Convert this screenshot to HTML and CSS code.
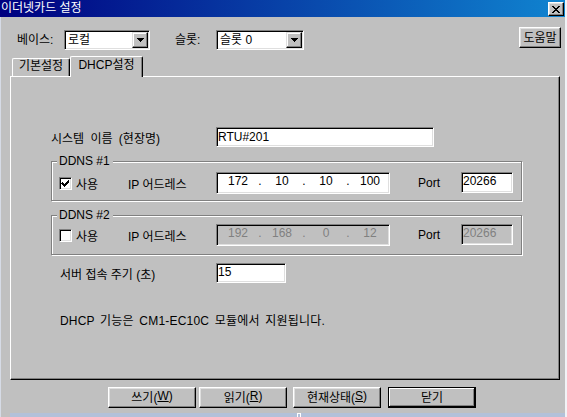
FILE: index.html
```html
<!DOCTYPE html>
<html lang="ko">
<head>
<meta charset="utf-8">
<title>이더넷카드 설정</title>
<link rel="stylesheet" href="styles.css">
</head>
<body>
<div class="window">
  <div class="titlebar">
    <span class="title">이더넷카드 설정</span>
    <span class="close"><svg width="8" height="7" viewBox="0 0 8 7" shape-rendering="crispEdges"><path d="M0 0h2v1h1v1h2v-1h1v-1h2v1h-1v1h-1v1h-1v1h1v1h1v1h1v1h-2v-1h-1v-1h-2v1h-1v1h-2v-1h1v-1h1v-1h1v-1h-1v-1h-1v-1h-1z" fill="#000"/></svg></span>
  </div>
  <div class="client">
    <div class="toprow">
      <span class="lbl lbl-base">베이스:</span>
      <div class="combo combo-base"><span class="combo-text">로컬</span><span class="dd-btn"><svg width="7" height="4" viewBox="0 0 7 4" shape-rendering="crispEdges"><path d="M0 0h7v1h-1v1h-1v1h-1v1h-1v-1h-1v-1h-1v-1h-1z" fill="#000"/></svg></span></div>
      <span class="lbl lbl-slot">슬롯:</span>
      <div class="combo combo-slot"><span class="combo-text">슬롯 0</span><span class="dd-btn"><svg width="7" height="4" viewBox="0 0 7 4" shape-rendering="crispEdges"><path d="M0 0h7v1h-1v1h-1v1h-1v1h-1v-1h-1v-1h-1v-1h-1z" fill="#000"/></svg></span></div>
      <button class="btn help">도움말</button>
    </div>
    <div class="tabs">
      <div class="tab tab-inactive">기본설정</div>
      <div class="tab tab-active">DHCP설정</div>
    </div>
    <div class="panel">
      <div class="row name-row">
        <span class="name-label">시스템 이름 (현장명)</span>
        <div class="field name-field">RTU#201</div>
      </div>
      <div class="group group1">
        <div class="group-title">DDNS #1</div>
        <div class="row ddns-row">
          <span class="check"><svg width="9" height="9" viewBox="0 0 9 9" shape-rendering="crispEdges"><path d="M1 3h1v1h1v1h1v-1h1v-1h1v-1h1v-1h1v3h-1v1h-1v1h-1v1h-1v1h-1v-1h-1v-1h-1v-1h-1z" fill="#000"/></svg></span>
          <span class="use-label">사용</span>
          <span class="ip-label">IP 어드레스</span>
          <div class="field ip-field">
            <span class="seg">172</span><span class="dot">.</span><span class="seg">10</span><span class="dot">.</span><span class="seg">10</span><span class="dot">.</span><span class="seg">100</span>
          </div>
          <span class="port-label">Port</span>
          <div class="field port-field">20266</div>
        </div>
      </div>
      <div class="group group2">
        <div class="group-title">DDNS #2</div>
        <div class="row ddns-row ddns-row2">
          <span class="check"></span>
          <span class="use-label">사용</span>
          <span class="ip-label">IP 어드레스</span>
          <div class="field ip-field disabled">
            <span class="seg">192</span><span class="dot">.</span><span class="seg">168</span><span class="dot">.</span><span class="seg">0</span><span class="dot">.</span><span class="seg">12</span>
          </div>
          <span class="port-label">Port</span>
          <div class="field port-field disabled">20266</div>
        </div>
      </div>
      <div class="row srv-row">
        <span class="srv-label">서버 접속 주기 (초)</span>
        <div class="field srv-field">15</div>
      </div>
      <div class="note">DHCP 기능은 CM1-EC10C 모듈에서 지원됩니다.</div>
    </div>
    <div class="buttons">
      <button class="btn cmd">쓰기(<u>W</u>)</button>
      <button class="btn cmd b-read">읽기(<u>R</u>)</button>
      <button class="btn cmd b-status">현재상태(<u>S</u>)</button>
      <button class="btn cmd b-close b-default">닫기</button>
    </div>
  </div>
</div>
<div class="strip">
  <div class="strip-left"></div>
  <div class="strip-main"><span class="strip-mark"></span></div>
</div>
</body>
</html>
```
FILE: styles.css
```css
* { box-sizing: border-box; }
html, body { margin: 0; padding: 0; }
body {
  width: 567px;
  height: 417px;
  overflow: hidden;
  background: #f2f3f6;
  font-family: "Liberation Sans", "Noto Sans CJK KR", sans-serif;
  font-size: 12px;
  color: #000;
}

.window {
  width: 565px;
  height: 413px;
  display: flex;
  flex-direction: column;
}

.titlebar {
  height: 17px;
  flex: none;
  display: flex;
  align-items: flex-start;
  background: linear-gradient(to right, #000080, #1084d0);
  color: #fff;
}
.title { flex: 1; padding-left: 1px; line-height: 17px; }
.close {
  width: 16px;
  height: 14px;
  margin: 2px 1px 0 0;
  background: #c0c0c0;
  border: 1px solid;
  border-color: #fff #000 #000 #fff;
  box-shadow: inset -1px -1px #808080, inset 1px 1px #dfdfdf;
  display: flex;
  align-items: center;
  justify-content: center;
}
.close svg { display: block; }

.client {
  flex: 1;
  background: #c0c0c0;
  border-left: 1px solid #d6dbe6;
  padding-top: 10px;
  display: flex;
  flex-direction: column;
}

.toprow { display: flex; align-items: flex-start; height: 23px; }
.lbl { margin-top: 3px; line-height: 20px; white-space: nowrap; }
.lbl-base { margin-left: 16px; width: 47px; }
.lbl-slot { margin-left: 25px; width: 41px; }

.combo {
  margin-top: 3px;
  height: 20px;
  display: flex;
  background: #fff;
  border: 1px solid;
  border-color: #808080 #fff #fff #808080;
  box-shadow: inset 1px 1px #000, inset -1px -1px #dfdfdf;
  padding: 1px;
}
.combo-base { width: 86px; }
.combo-slot { width: 88px; }
.combo-text { flex: 1; padding-left: 2px; line-height: 16px; white-space: nowrap; }
.dd-btn {
  width: 16px;
  height: 16px;
  background: #c0c0c0;
  border: 1px solid;
  border-color: #dfdfdf #000 #000 #dfdfdf;
  box-shadow: inset -1px -1px #808080, inset 1px 1px #fff;
  display: flex;
  align-items: center;
  justify-content: center;
}
.dd-btn svg { display: block; }

.btn {
  background: #c0c0c0;
  border: 1px solid;
  border-color: #fff #000 #000 #fff;
  box-shadow: inset -1px -1px #808080, inset 1px 1px #dfdfdf;
  font: inherit;
  color: #000;
  padding: 0 0 2px 0;
  margin: 0;
  display: flex;
  align-items: center;
  justify-content: center;
  white-space: nowrap;
}
.help { margin-left: auto; margin-right: 4px; width: 42px; height: 21px; }

.tabs {
  display: flex;
  align-items: flex-end;
  height: 20px;
  margin-top: 6px;
  padding-left: 11px;
}
.tab {
  border-top: 1px solid #fff;
  border-left: 1px solid #fff;
  border-right: 1px solid #000;
  box-shadow: inset -1px 0 #808080;
  border-radius: 2px 2px 0 0;
  text-align: center;
  background: #c0c0c0;
  white-space: nowrap;
}
.tab-inactive { width: 58px; height: 18px; line-height: 15px; }
.tab-active {
  width: 73px;
  height: 21px;
  margin-bottom: -1px;
  line-height: 16px;
  position: relative;
  z-index: 1;
}

.panel {
  margin-left: 9px;
  width: 550px;
  height: 304px;
  flex: none;
  border: 1px solid;
  border-color: #fff #000 #000 #fff;
  box-shadow: inset -1px -1px #808080;
  padding: 50px 0 0 40px;
  display: flex;
  flex-direction: column;
}

.row { display: flex; align-items: center; white-space: nowrap; }
.name-row { height: 20px; }
.name-label { width: 165px; word-spacing: 3px; }

.field {
  height: 20px;
  background: #fff;
  border: 1px solid;
  border-color: #808080 #fff #fff #808080;
  box-shadow: inset 1px 1px #000, inset -1px -1px #dfdfdf;
  padding: 0 0 0 1px;
  line-height: 18px;
  white-space: nowrap;
  overflow: hidden;
}
.field.disabled { background: #c0c0c0; color: #808080; }
.name-field { width: 218px; }

.group {
  margin-top: 14px;
  width: 471px;
  height: 40px;
  flex: none;
  border: 1px solid #808080;
  box-shadow: inset 1px 1px #fff, 1px 1px #fff;
  padding-left: 7px;
}
.group-title {
  width: fit-content;
  margin-top: -8px;
  margin-left: -2px;
  padding: 0 3px 0 2px;
  line-height: 14px;
  height: 14px;
  background: #c0c0c0;
  white-space: nowrap;
}
.ddns-row { margin-top: 4px; height: 22px; }
.ddns-row2 { margin-top: 2px; }

.check {
  width: 13px;
  height: 13px;
  flex: none;
  background: #fff;
  border: 1px solid;
  border-color: #808080 #fff #fff #808080;
  box-shadow: inset 1px 1px #000, inset -1px -1px #dfdfdf;
  padding: 1px;
}
.check svg { display: block; }
.use-label { margin-left: 4px; width: 52px; }
.ip-label { width: 88px; }
.ip-field {
  width: 174px;
  height: 22px;
  display: flex;
  padding-left: 2px;
  line-height: 17px;
}
.seg { width: 38px; text-align: center; }
.dot { width: 6px; text-align: center; }
.port-label { margin-left: 28px; width: 43px; }
.port-field { width: 52px; height: 21px; align-self: flex-start; line-height: 17px; }

.srv-row { margin-top: 8px; height: 20px; }
.srv-label { margin-left: 9px; width: 156px; }
.srv-field { width: 70px; line-height: 17px; }

.note { margin-top: 31px; margin-left: 9px; line-height: 14px; white-space: nowrap; word-spacing: 2px; letter-spacing: 0.2px; }

.buttons { display: flex; margin-top: 7px; padding-left: 107px; }
.cmd { width: 88px; height: 21px; padding-bottom: 3px; }
.cmd u { text-decoration: underline; }
.b-read { margin-left: 3px; }
.b-status { margin-left: 6px; }
.b-close { margin-left: 7px; }
.b-default {
  border: 1px solid #000;
  box-shadow: inset -1px -1px #000, inset 1px 1px #fff, inset -2px -2px #808080;
}

.strip { display: flex; height: 4px; }
.strip-left { width: 10px; background: #c0c0c0; border-left: 1px solid #d6dbe6; }
.strip-main { width: 555px; background: #b3c1d9; display: flex; }
.strip-mark {
  margin-left: 287px;
  width: 4px;
  height: 4px;
  border: 1px solid #fff;
  border-bottom: none;
}
```
